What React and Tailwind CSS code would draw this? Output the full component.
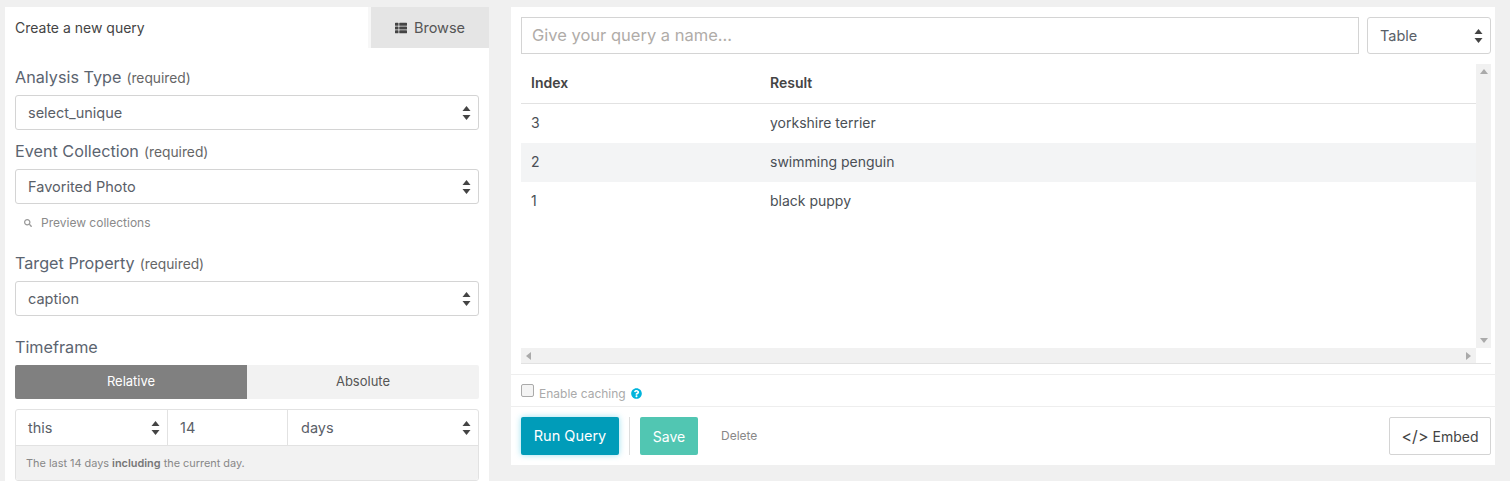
import { FaThList, FaQuestionCircle, FaSearch } from "react-icons/fa";

const Arrows = () => (
  <svg width="9" height="14" viewBox="0 0 9 14" className="shrink-0 fill-[#444]">
    <path d="M4.5 0 L8.5 5 L0.5 5 Z" />
    <path d="M4.5 14 L8.5 9 L0.5 9 Z" />
  </svg>
);

const Select = ({ value }) => (
  <div className="h-[35px] flex items-center justify-between pl-3 pr-[7px] bg-white border border-[#d4d4d4] rounded-[3px] text-[14.5px] text-[#5a6068]">
    <span>{value}</span>
    <Arrows />
  </div>
);

const Label = ({ children, required, className }) => (
  <div className={"h-[20px] leading-[20px] text-[16.2px] text-[#5b6470] " + className}>
    {children}
    {required && <span className="text-[13.8px] leading-none text-[#666] ml-[5px]">(required)</span>}
  </div>
);

const rows = [
  ["3", "yorkshire terrier", ""],
  ["2", "swimming penguin", "bg-[#f3f4f5]"],
  ["1", "black puppy", ""],
];

export default function App() {
  return (
    <div className="w-[1510px] h-[481px] overflow-hidden bg-[#f0f0f0] pt-[7px] pl-[5px] flex items-start gap-[22px] font-['Inter',sans-serif]">
      <div className="w-[484px] h-[474px] bg-white shrink-0">
        <div className="h-[41px] flex">
          <div className="w-[363px] pl-[10px] flex items-center text-[14px] text-[#444]">Create a new query</div>
          <div className="w-[3px] bg-[#f7f7f7]" />
          <div className="w-[118px] bg-[#e5e5e5] flex items-center justify-center gap-[7px] text-[14.5px] text-[#555]">
            <FaThList className="text-[12px] text-[#444]" />
            Browse
          </div>
        </div>

        <div className="px-[10px]">
          <Label required className="mt-[19px] mb-[8px]">Analysis Type</Label>
          <Select value="select_unique" />
          <Label required className="mt-[11px] mb-[8px]">Event Collection</Label>
          <Select value="Favorited Photo" />
          <div className="h-[38px] pl-[9px] flex items-center gap-[9px] text-[12px] text-[#8a8a8a]">
            <FaSearch className="text-[8px] text-[#999]" />
            Preview collections
          </div>
          <Label required className="mt-[11px] mb-[8px]">Target Property</Label>
          <Select value="caption" />
          <Label className="mt-[21px] mb-[8px]">Timeframe</Label>

          <div className="h-[34px] flex text-[13px] rounded-[2px] overflow-hidden">
            <div className="w-[232px] bg-[#808080] text-white flex items-center justify-center">Relative</div>
            <div className="w-[232px] bg-[#f2f2f2] text-[#555] flex items-center justify-center">Absolute</div>
          </div>

          <div className="mt-[10px] h-[72px] border border-[#e2e2e2] rounded-[3px] overflow-hidden text-[14.5px] text-[#5a6068]">
            <div className="h-[36px] flex border-b border-[#e2e2e2]">
              <div className="w-[152px] pl-3 pr-[7px] flex items-center justify-between border-r border-[#e2e2e2]">
                <span>this</span>
                <Arrows />
              </div>
              <div className="w-[120px] pl-3 flex items-center border-r border-[#e2e2e2]">14</div>
              <div className="flex-1 pl-[13px] pr-[7px] flex items-center justify-between">
                <span>days</span>
                <Arrows />
              </div>
            </div>
            <div className="h-[35px] bg-[#f2f2f2] pl-[10px] flex items-center text-[10.9px] text-[#888]">
              <span>
                The last 14 days <b className="font-semibold text-[#777]">including</b> the current day.
              </span>
            </div>
          </div>
        </div>
      </div>

      <div className="w-[984px] h-[458px] bg-white shrink-0 flex flex-col">
        <div className="pl-[10px] pr-[4px] pt-[10px] flex gap-2">
          <div className="flex-1 h-[37px] border border-[#d4d4d4] pl-[10px] flex items-center text-[16.5px] text-[#b0aca8]">
            Give your query a name...
          </div>
          <div className="w-[124px] h-[37px] border border-[#d4d4d4] rounded-[3px] pl-3 pr-[7px] flex items-center justify-between text-[14.5px] text-[#5a6068]">
            <span>Table</span>
            <Arrows />
          </div>
        </div>

        <div className="h-[300px] mt-[10px] ml-[10px] w-[970px] border-b border-[#e2e2e2] flex flex-col">
          <div className="flex h-[284px] shrink-0">
            <div className="w-[955px] text-[14px] text-[#4a4f55]">
              <div className="h-[40px] pb-[2px] flex items-center border-b border-[#e2e2e2] font-semibold text-[#444]">
                <div className="w-[239px] pl-[10px]">Index</div>
                <div className="pl-[10px]">Result</div>
              </div>
              {rows.map(([index, result, bg]) => (
                <div key={index} className={"h-[39px] pb-[2px] flex items-center " + bg}>
                  <div className="w-[239px] pl-[10px]">{index}</div>
                  <div className="pl-[10px]">{result}</div>
                </div>
              ))}
            </div>
            <div className="w-[15px] bg-[#f1f1f1] flex flex-col items-center justify-between py-[5px]">
              <svg width="8" height="5" viewBox="0 0 8 5" className="fill-[#aaa]"><path d="M4 0 L8 5 L0 5 Z" /></svg>
              <svg width="8" height="5" viewBox="0 0 8 5" className="fill-[#aaa]"><path d="M4 5 L8 0 L0 0 Z" /></svg>
            </div>
          </div>
          <div className="h-[15px] w-[955px] bg-[#f1f1f1] flex items-center justify-between px-[5px]">
            <svg width="5" height="8" viewBox="0 0 5 8" className="fill-[#aaa]"><path d="M0 4 L5 0 L5 8 Z" /></svg>
            <svg width="5" height="8" viewBox="0 0 5 8" className="fill-[#aaa]"><path d="M5 4 L0 0 L0 8 Z" /></svg>
          </div>
        </div>

        <div className="mt-[10px] h-[33px] border-y border-[#eeeeee] pl-[10px] pt-[6px] flex items-center gap-[5px] text-[12px] text-[#aaa]">
          <span className="w-[13px] h-[13px] rounded-[2px] border border-[#aaa] bg-[#f4f4f4] mt-[-6px]" />
          Enable caching
          <FaQuestionCircle className="text-[11px] text-[#00b4dc]" />
        </div>

        <div className="flex-1 pl-[10px] pr-[4px] pt-[10px] flex items-start">
          <div className="w-[98px] h-[38px] pb-px bg-[#009cb9] rounded-[2px] shadow-[0_0_6px_rgba(0,180,220,0.4)] text-white text-[14.5px] flex items-center justify-center">
            Run Query
          </div>
          <div className="w-px h-[38px] bg-[#dddddd] ml-[10px] mr-[10px]" />
          <div className="w-[58px] h-[38px] bg-[#51c6b2] rounded-[2px] text-white text-[14px] flex items-center justify-center">
            Save
          </div>
          <div className="h-[38px] ml-[23px] flex items-center text-[12px] text-[#888]">Delete</div>
          <div className="ml-auto w-[102px] h-[38px] border border-[#d4d4d4] rounded-[2px] flex items-center justify-center gap-1 text-[14px] text-[#444]">
            <span className="text-[16px]">&lt;/&gt;</span> Embed
          </div>
        </div>
      </div>
    </div>
  );
}
